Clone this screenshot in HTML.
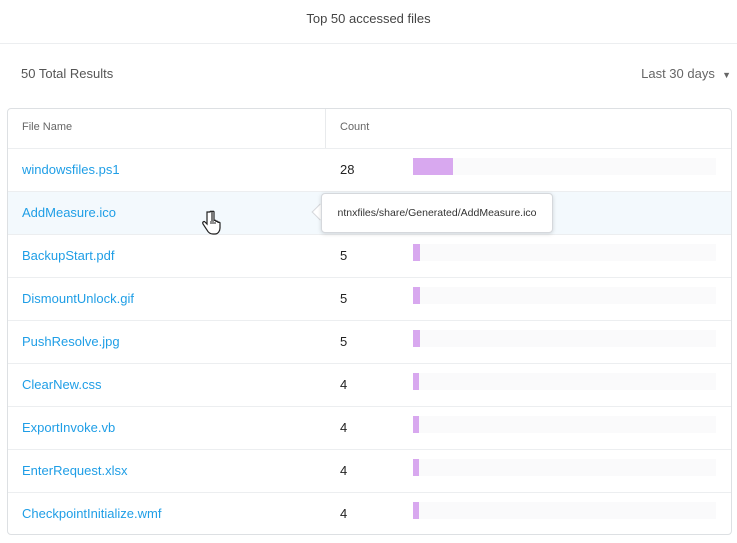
<!DOCTYPE html><html><head><style>
body{margin:0;width:737px;height:543px;overflow:hidden;background:#fff;font-family:"Liberation Sans",sans-serif;position:relative}
.t{position:absolute;top:11px;left:0;width:737px;text-align:center;font-size:13px;color:#444}
.hr{position:absolute;top:43px;left:0;width:737px;height:1px;background:#eceef0}
.tot{position:absolute;left:21px;top:66px;font-size:13px;color:#555}
.last{position:absolute;right:6px;top:66px;font-size:13px;color:#666}
.tab{position:absolute;left:7px;top:108px;width:723px;height:425px;border:1px solid #dde0e3;border-radius:4px}
.hd{position:absolute;top:121px;font-size:11px;color:#666}
.vd{position:absolute;left:325px;top:109px;width:1px;height:40px;background:#e8eaec}
.row{position:absolute;left:8px;width:723px;height:42px;border-top:1px solid #eceef0}
.row .n{position:absolute;left:14px;top:13px;font-size:13px;color:#1f9ee6}
.row .c{position:absolute;left:332px;top:13px;font-size:13px;color:#222}
.row .tr{position:absolute;left:405px;top:9px;width:303px;height:17px;background:#fafafb}
.row .b{position:absolute;left:0;top:0;height:17px;background:#d8a8ef}
.tip{position:absolute;left:321px;top:193px;width:230px;height:38px;background:#fff;border:1px solid #d5d8dc;border-radius:4px;box-shadow:0 1px 4px rgba(0,0,0,.15);font-size:10.5px;color:#333;line-height:38px;text-align:center}
.ar{position:absolute;left:314px;top:206px;width:11px;height:11px;background:#fff;border-left:1px solid #d5d8dc;border-bottom:1px solid #d5d8dc;transform:rotate(45deg)}
</style></head><body>
<div class="t">Top 50 accessed files</div><div class="hr"></div>
<div class="tot">50 Total Results</div><div class="last">Last 30 days &nbsp;<span style="font-size:9px">&#9660;</span></div>
<div class="tab"></div><div class="vd"></div>
<div class="hd" style="left:22px">File Name</div><div class="hd" style="left:340px">Count</div>
<div class="row" style="top:148px"><span class="n">windowsfiles.ps1</span><span class="c">28</span><div class="tr"><div class="b" style="width:40px"></div></div></div>
<div class="row" style="top:191px;background:#f3f9fd"><span class="n">AddMeasure.ico</span></div>
<div class="row" style="top:234px"><span class="n">BackupStart.pdf</span><span class="c">5</span><div class="tr"><div class="b" style="width:7px"></div></div></div>
<div class="row" style="top:277px"><span class="n">DismountUnlock.gif</span><span class="c">5</span><div class="tr"><div class="b" style="width:7px"></div></div></div>
<div class="row" style="top:320px"><span class="n">PushResolve.jpg</span><span class="c">5</span><div class="tr"><div class="b" style="width:7px"></div></div></div>
<div class="row" style="top:363px"><span class="n">ClearNew.css</span><span class="c">4</span><div class="tr"><div class="b" style="width:6px"></div></div></div>
<div class="row" style="top:406px"><span class="n">ExportInvoke.vb</span><span class="c">4</span><div class="tr"><div class="b" style="width:6px"></div></div></div>
<div class="row" style="top:449px"><span class="n">EnterRequest.xlsx</span><span class="c">4</span><div class="tr"><div class="b" style="width:6px"></div></div></div>
<div class="row" style="top:492px"><span class="n">CheckpointInitialize.wmf</span><span class="c">4</span><div class="tr"><div class="b" style="width:6px"></div></div></div>
<div class="ar"></div><div class="tip">ntnxfiles/share/Generated/AddMeasure.ico</div>
<svg style="position:absolute;left:200px;top:210px" width="22" height="26" viewBox="0 0 22 26"><path d="M7 2v12l-2-2c-1-1-3 0-2 2l4 6c1 2 3 4 6 4h2c3 0 5-3 5-6v-5c0-1-2-1-2 0v-1c0-1-2-1-2 0v-1c0-1-2-1-2 0V2c0-1-2-1-2 0v9V2c0-1-2-1-2 0z" fill="#fff" stroke="#222" stroke-width="1.2"/><path d="M11 11v3M13 11v3M15 12v2" stroke="#222" stroke-width="1"/></svg>
</body></html>
